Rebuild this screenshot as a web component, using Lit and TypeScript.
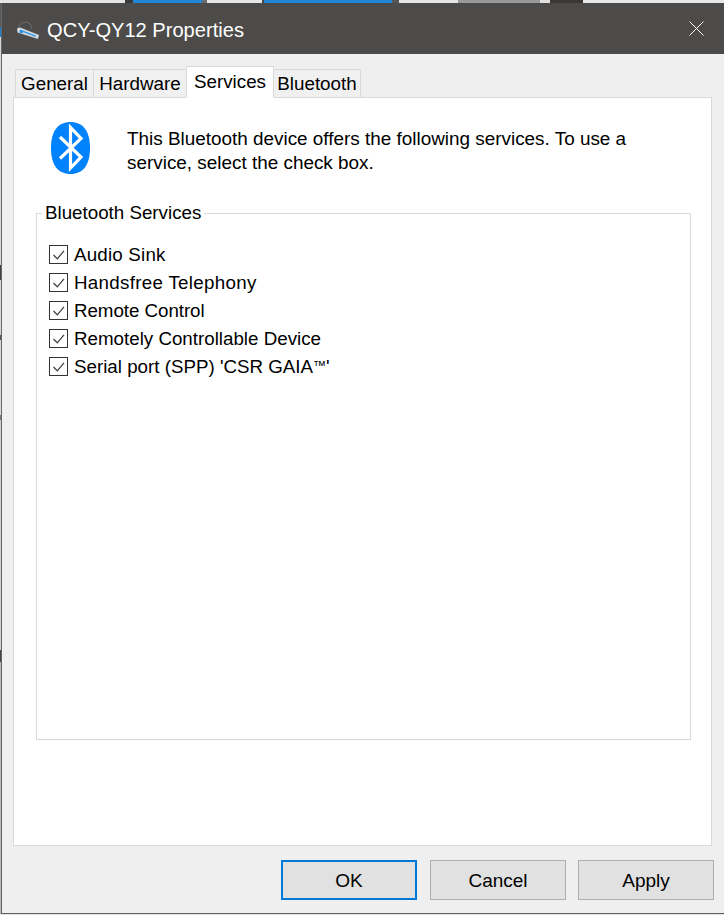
import { LitElement, html, css } from "lit";
import { customElement } from "lit/decorators.js";

const SERVICES = [
  { name: html`Audio Sink`, tracking: 0.2 },
  { name: html`Handsfree Telephony`, tracking: 0.3 },
  { name: html`Remote Control`, tracking: -0.05 },
  { name: html`Remotely Controllable Device`, tracking: 0 },
  { name: html`Serial port (SPP) 'CSR GAIA<span class="tm">™</span>'`, tracking: 0 },
];

const TABS = [
  { label: "General", width: 79, active: false },
  { label: "Hardware", width: 94, active: false },
  { label: "Services", width: 88, active: true },
  { label: "Bluetooth", width: 88, active: false },
];

// Slivers of the desktop showing behind the dialog: [size in px, colour]
const TOP_STRIP: [number, string][] = [
  [125, "#e4e4e4"],
  [8, "#3a3a3a"],
  [69, "#1f86d8"],
  [5, "#6a6a6a"],
  [55, "#e6e6e6"],
  [2, "#444444"],
  [128, "#1f86d8"],
  [7, "#555555"],
  [59, "#e6e6e6"],
  [82, "#9a9a9a"],
  [10, "#e0e0e0"],
  [33, "#3a3735"],
  [141, "#e8e8e8"],
];

const LEFT_STRIP: [number, string][] = [
  [24, "#5a5a5a"],
  [10, "#1a7fd0"],
  [228, "#d8d8d8"],
  [15, "#444444"],
  [55, "#d8d8d8"],
  [5, "#555555"],
  [75, "#d8d8d8"],
  [5, "#777777"],
  [230, "#d0d0d0"],
  [12, "#444444"],
  [252, "#b8b8b8"],
];

@customElement("app-root")
export class AppRoot extends LitElement {
  static styles = css`
    :host {
      display: block;
      width: 724px;
      height: 915px;
      overflow: hidden;
      font-family: "Liberation Sans", Arial, sans-serif;
      color: #000;
      background: #e4e4e4;
    }
    .top-strip {
      display: flex;
      height: 3px;
    }
    .main {
      display: flex;
      height: 911px;
    }
    .left-strip {
      width: 1px;
      flex: none;
      display: flex;
      flex-direction: column;
    }
    .frame {
      flex: 1;
      min-width: 0;
      display: flex;
      flex-direction: column;
      border-left: 1px solid #666;
      border-bottom: 1px solid #5f5f5f;
      background: #efefef;
    }
    .title {
      box-sizing: border-box;
      height: 51px;
      flex: none;
      background: #4d4b49;
      color: #fff;
      display: flex;
      align-items: center;
      font-size: 20.100px;
      padding: 3px 0 0 14px;
      gap: 5px;
    }
    .title span { flex: 1; }
    .close { margin: 0 20px 3px 0; }
    .body {
      flex: 1;
      padding: 12px 12px 0 11px;
      display: flex;
      flex-direction: column;
    }
    .tabs {
      display: flex;
      height: 32px;
      padding-left: 2px;
      align-items: flex-end;
      position: relative;
      z-index: 1;
      margin-bottom: -1px;
    }
    .tab {
      box-sizing: border-box;
      height: 29px;
      border: 1px solid #d9d9d9;
      margin-right: -1px;
      background: #f0f0f0;
      font-size: 18.800px;
      display: flex;
      align-items: center;
      justify-content: center;
      padding-top: 1px;
    }
    .tab.active {
      height: 32px;
      background: #fff;
      border-bottom-color: #fff;
      position: relative;
      padding-top: 0;
      padding-bottom: 1px;
      z-index: 2;
    }
    .page {
      box-sizing: border-box;
      height: 749px;
      border: 1px solid #d9d9d9;
      background: #fff;
      padding: 0 20px 0 22px;
    }
    .intro {
      display: flex;
      height: 115px;
      padding-top: 24px;
      box-sizing: border-box;
      font-size: 18.900px;
      line-height: 24px;
    }
    .bt { margin: 0 0 0 15px; flex: none; }
    .intro p { margin: 5px 0 0 37px; width: 540px; }
    .group {
      box-sizing: border-box;
      height: 527px;
      border: 1px solid #d9d9d9;
      position: relative;
      padding: 26px 0 0 12px;
    }
    .legend {
      position: absolute;
      top: -12px;
      left: 5px;
      padding: 0 3px;
      background: #fff;
      font-size: 18.750px;
      line-height: 22px;
    }
    .row {
      display: flex;
      align-items: center;
      height: 28px;
      gap: 6px;
      font-size: 18.750px;
    }
    .row svg { flex: none; }
    .row .label { padding-top: 1px; }
    .tm {
      font-size: 13px;
      vertical-align: 3px;
    }
    .footer {
      flex: 1;
      display: flex;
      justify-content: flex-end;
      gap: 12px;
      padding: 14px 0 0 0;
      margin-right: -2px;
    }
    .btn {
      box-sizing: border-box;
      width: 136px;
      height: 40px;
      border: 1px solid #adadad;
      background: #e1e1e1;
      font: 19px "Liberation Sans", Arial, sans-serif;
      color: #000;
      padding: 1px 0 0;
    }
    .btn.default {
      border: 2px solid #0078d7;
      margin-right: 1px;
    }
  `;

  render() {
    return html`
      <div class="top-strip">
        ${TOP_STRIP.map(([w, c]) => html`<div style="width:${w}px;background:${c}"></div>`)}
      </div>
      <div class="main">
        <div class="left-strip">
          ${LEFT_STRIP.map(([h, c]) => html`<div style="height:${h}px;background:${c}"></div>`)}
        </div>
        <div class="frame">
          <div class="title">
            <svg width="26" height="22" viewBox="0 0 26 22">
              <path d="M2.500 10a7 7 0 0 1 12-5 7 7 0 0 1 .5 5" fill="none" stroke="#6f6f6f" stroke-width="1"/>
              <path d="M1 9.500l3-1 19 7.500-1 4L1.500 13.500z" fill="#d5dade"/>
              <path d="M4 10.500l3 1-.5 3-3-1z" fill="#1e88e5"/>
              <path d="M7 11.500l13 5-.5 1.500-13-5z" fill="#3e9be8"/>
            </svg>
            <span>QCY-QY12 Properties</span>
            <svg class="close" width="15" height="15" viewBox="0 0 15 15">
              <path d="M.5.5l14 14M14.500.5l-14 14" stroke="#fff" stroke-width="1" fill="none"/>
            </svg>
          </div>
          <div class="body">
            <div class="tabs">
              ${TABS.map(
                (t) => html`<div class="tab ${t.active ? "active" : ""}" style="width:${t.width}px">${t.label}</div>`
              )}
            </div>
            <div class="page">
              <div class="intro">
                <svg class="bt" width="39" height="52" viewBox="0 0 39 52">
                  <path d="M19.500 0C32 0 39 9 39 26S32 52 19.500 52 0 43 0 26 7 0 19.500 0z" fill="#0082fc"/>
                  <path d="M9 15l21 20-10.500 11V5.500L30 16.500 9 36.500" fill="none" stroke="#fff" stroke-width="3.200"/>
                </svg>
                <p>This Bluetooth device offers the following services. To use a service, select the check box.</p>
              </div>
              <div class="group">
                <div class="legend">Bluetooth Services</div>
                ${SERVICES.map(
                  (s) => html`
                    <div class="row">
                      <svg width="19" height="19" viewBox="0 0 19 19">
                        <rect x="0.500" y="0.500" width="18" height="18" fill="#fff" stroke="#333"/>
                        <path d="M4.500 10l3.800 3.800 6.700-8" fill="none" stroke="#444" stroke-width="1.300"/>
                      </svg>
                      <span class="label" style="letter-spacing:${s.tracking}px">${s.name}</span>
                    </div>
                  `
                )}
              </div>
            </div>
            <div class="footer">
              <button class="btn default">OK</button>
              <button class="btn">Cancel</button>
              <button class="btn">Apply</button>
            </div>
          </div>
        </div>
      </div>
    `;
  }
}
